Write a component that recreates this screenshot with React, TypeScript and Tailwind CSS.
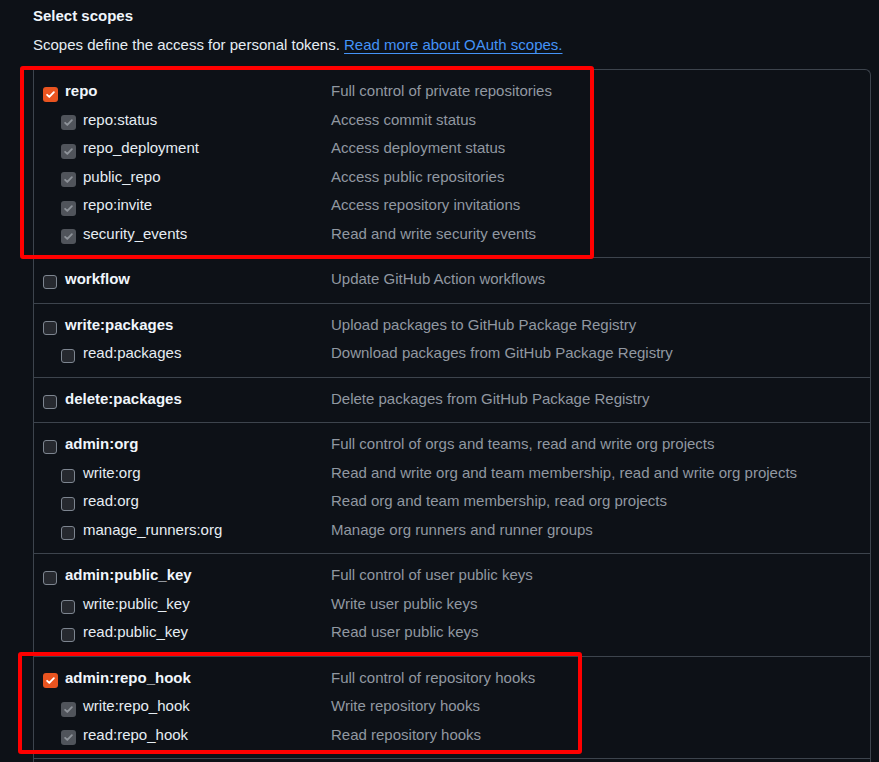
import React from "react";

type State = "on" | "off" | "inherit";

type Scope = {
  name: string;
  desc: string;
  state: State;
  subs?: { name: string; desc: string }[];
};

const scopes: Scope[] = [
  {
    name: "repo",
    desc: "Full control of private repositories",
    state: "on",
    subs: [
      { name: "repo:status", desc: "Access commit status" },
      { name: "repo_deployment", desc: "Access deployment status" },
      { name: "public_repo", desc: "Access public repositories" },
      { name: "repo:invite", desc: "Access repository invitations" },
      { name: "security_events", desc: "Read and write security events" },
    ],
  },
  { name: "workflow", desc: "Update GitHub Action workflows", state: "off" },
  {
    name: "write:packages",
    desc: "Upload packages to GitHub Package Registry",
    state: "off",
    subs: [{ name: "read:packages", desc: "Download packages from GitHub Package Registry" }],
  },
  { name: "delete:packages", desc: "Delete packages from GitHub Package Registry", state: "off" },
  {
    name: "admin:org",
    desc: "Full control of orgs and teams, read and write org projects",
    state: "off",
    subs: [
      { name: "write:org", desc: "Read and write org and team membership, read and write org projects" },
      { name: "read:org", desc: "Read org and team membership, read org projects" },
      { name: "manage_runners:org", desc: "Manage org runners and runner groups" },
    ],
  },
  {
    name: "admin:public_key",
    desc: "Full control of user public keys",
    state: "off",
    subs: [
      { name: "write:public_key", desc: "Write user public keys" },
      { name: "read:public_key", desc: "Read user public keys" },
    ],
  },
  {
    name: "admin:repo_hook",
    desc: "Full control of repository hooks",
    state: "on",
    subs: [
      { name: "write:repo_hook", desc: "Write repository hooks" },
      { name: "read:repo_hook", desc: "Read repository hooks" },
    ],
  },
];

function Check({ state }: { state: State }) {
  if (state === "off") {
    return (
      <span className="block w-[14px] h-[14px] shrink-0 rounded-[3px] border border-[#7d8590] bg-[#26292f] translate-y-[3px]" />
    );
  }
  const on = state === "on";
  return (
    <span
      className={
        on
          ? "flex items-center justify-center w-[15px] h-[15px] shrink-0 rounded-[3px] bg-[#e95420] translate-y-[3px]"
          : "flex items-center justify-center w-[15px] h-[15px] shrink-0 rounded-[3px] bg-[#50545b] translate-y-[3px]"
      }
    >
      <svg width="11" height="11" viewBox="0 0 12 12" fill="none">
        <path
          d="M2.3 6.3l2.4 2.4 5-5.2"
          stroke={on ? "#ffffff" : "#8e939a"}
          strokeWidth="2"
          strokeLinecap="round"
          strokeLinejoin="round"
        />
      </svg>
    </span>
  );
}

function Row({ name, desc, state, sub }: { name: string; desc: string; state: State; sub?: boolean }) {
  return (
    <div className="flex items-center h-[28.5px]">
      <div className={sub ? "flex items-center w-[288px] pl-[18px] gap-[7px]" : "flex items-center w-[288px] gap-[7px]"}>
        <span className="flex w-[15px] shrink-0">
          <Check state={state} />
        </span>
        <span className={sub ? "text-[#e6edf3]" : "font-bold text-[#f0f6fc]"}>{name}</span>
      </div>
      <div className="text-[#9198a1]">{desc}</div>
    </div>
  );
}

export default function App() {
  return (
    <div className="relative min-h-screen overflow-hidden bg-[#0d1117] font-['Liberation_Sans',Arial,sans-serif] text-[15px] leading-[20px]">
      <div className="pl-[33px] pt-[6px]">
        <div className="font-bold text-[#f0f6fc]">Select scopes</div>
        <p className="mt-[9px] text-[#e6edf3]">
          Scopes define the access for personal tokens.{" "}
          <a className="text-[#4493f8] underline underline-offset-[3px]" href="#">
            Read more about OAuth scopes.
          </a>
        </p>
        <div className="mt-[14px] w-[838px] border-l border-r border-t border-[#3d444d] rounded-tr-md">
          {scopes.map((s) => (
            <div key={s.name} className="pl-[9px] pt-[7px] pb-[9px] border-b border-[#3d444d]">
              <Row name={s.name} desc={s.desc} state={s.state} />
              {s.subs?.map((c) => (
                <Row key={c.name} name={c.name} desc={c.desc} state={s.state === "on" ? "inherit" : "off"} sub />
              ))}
            </div>
          ))}
          <div className="h-[20px]" />
        </div>
      </div>

      {/* annotation boxes */}
      <div className="absolute left-[20px] top-[66px] w-[574px] h-[193px] border-[4px] border-[#ff0000] rounded-[3px]" />
      <div className="absolute left-[18px] top-[652px] w-[564px] h-[102px] border-[4px] border-[#ff0000] rounded-[3px]" />
    </div>
  );
}
